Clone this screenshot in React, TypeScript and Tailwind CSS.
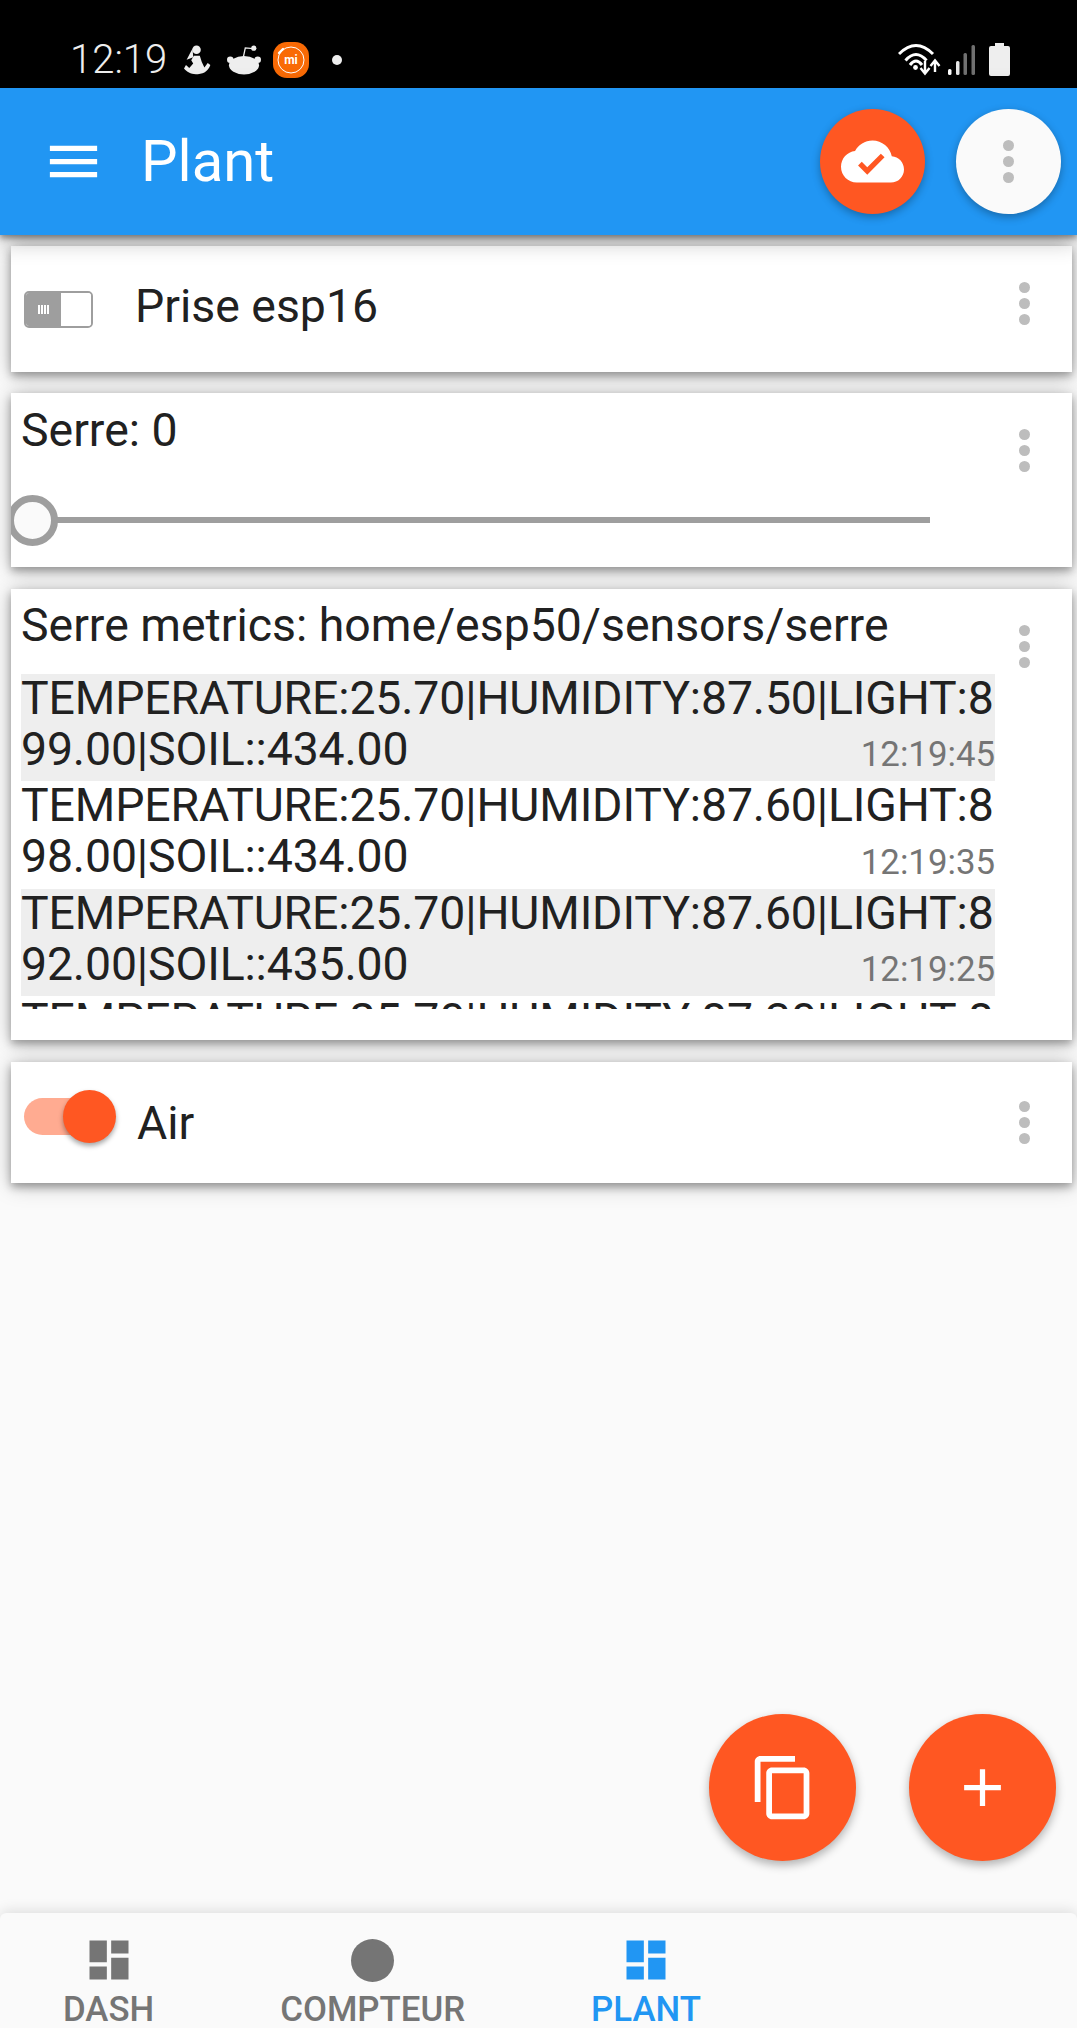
// App.tsx
const font = "font-['Roboto',sans-serif]";

const logs = [
  { text: "TEMPERATURE:25.70|HUMIDITY:87.50|LIGHT:899.00|SOIL::434.00", time: "12:19:45", shade: true },
  { text: "TEMPERATURE:25.70|HUMIDITY:87.60|LIGHT:898.00|SOIL::434.00", time: "12:19:35", shade: false },
  { text: "TEMPERATURE:25.70|HUMIDITY:87.60|LIGHT:892.00|SOIL::435.00", time: "12:19:25", shade: true },
  { text: "TEMPERATURE:25.70|HUMIDITY:87.30|LIGHT:890.00|SOIL::435.00", time: "12:19:15", shade: false },
];

const DASHBOARD = "M3 13h8V3H3v10zm0 8h8v-6H3v6zm10 0h8V11h-8v10zm0-18v6h8V3h-8z";

const Dots = () => (
  <div className="flex w-[11px] flex-col gap-[5px]">
    <span className="h-[11px] w-[11px] rounded-full bg-[#bdbdbd]" />
    <span className="h-[11px] w-[11px] rounded-full bg-[#bdbdbd]" />
    <span className="h-[11px] w-[11px] rounded-full bg-[#bdbdbd]" />
  </div>
);

const cardClass =
  "relative ml-[11px] mr-[5px] bg-white shadow-[0_4px_8px_rgba(0,0,0,0.3),0_2px_20px_rgba(0,0,0,0.25)]";

const StatusBar = () => (
  <div className="flex h-[88px] shrink-0 items-start justify-between bg-black">
    <div className="flex items-center pl-[70px] pt-[38px]">
      <span className="text-[40px] font-light leading-[44px] text-[#eeeeee]">12:19</span>
      {/* health app */}
      <svg width="27" height="30" viewBox="28 24 82 90" className="ml-[17px]" fill="#eeeeee">
        <circle cx="66" cy="38" r="13" />
        <path d="M54 34 36 68l20-7z" />
        <path d="M58 56h18l6 19 8 17 10-14 8 6c-6 16-16 26-38 28-20 2-32-6-42-17l6-11 10 9 12-13-6-10z" />
      </svg>
      {/* reddit */}
      <svg width="34" height="30" viewBox="158 24 104 90" className="ml-[16px]" fill="#eeeeee">
        <ellipse cx="210" cy="85" rx="46" ry="28" />
        <circle cx="168" cy="68" r="10" />
        <circle cx="252" cy="68" r="10" />
        <circle cx="240" cy="33" r="8" />
        <path d="M208 60l6-28 24 2" fill="none" stroke="#eeeeee" strokeWidth="4" />
      </svg>
      {/* mi */}
      <svg width="36" height="36" viewBox="0 0 36 36" className="ml-[12px]">
        <rect width="36" height="36" rx="14" fill="#f96a05" />
        <circle cx="18" cy="18" r="13" fill="none" stroke="#fff" strokeWidth="1" />
        <path d="M6 11l4-4" stroke="#fff" strokeWidth="2.4" strokeLinecap="round" />
        <text x="18" y="22" textAnchor="middle" fontSize="12" fontWeight="700" fill="#fff">
          mi
        </text>
      </svg>
      <span className="ml-[23px] h-[10px] w-[10px] rounded-full bg-[#eeeeee]" />
    </div>
    <div className="mr-[67px] mt-[43px] flex items-start">
      <svg width="78" height="33" viewBox="0 0 78 33" fill="none">
        <path d="M1 11Q18 -6 35 11" stroke="#fff" strokeWidth="3" />
        <path d="M7.5 17.5Q18 5.5 28.5 17.5" stroke="#fff" strokeWidth="3" />
        <path d="M12 22Q18 14 24 22" stroke="#fff" strokeWidth="3" />
        <circle cx="17.5" cy="24.5" r="2.4" fill="#fff" />
        <path d="M27 18v11M22.5 25l4.5 5.5 4.5-5.5" stroke="#fff" strokeWidth="2.4" />
        <path d="M37 29V19M32.5 23l4.5-5.5 4.5 5.5" stroke="#fff" strokeWidth="2.4" />
        <rect x="50" y="26" width="3.5" height="6" rx="1.5" fill="#fff" />
        <rect x="58" y="18" width="3.5" height="14" rx="1.5" fill="#e8e8e8" />
        <rect x="65.5" y="10" width="3.5" height="22" rx="1.5" fill="#707070" />
        <rect x="73.5" y="2" width="3.5" height="30" rx="1.5" fill="#707070" />
      </svg>
      <svg width="21" height="33" viewBox="0 0 21 33" className="ml-[13px]" fill="#eeeeee">
        <path d="M6 0h9v3h4a2 2 0 0 1 2 2v26a2 2 0 0 1-2 2H2a2 2 0 0 1-2-2V5a2 2 0 0 1 2-2h4z" />
      </svg>
    </div>
  </div>
);

const Header = () => (
  <div className="relative z-10 flex h-[147px] shrink-0 items-center bg-[#2196f3] pl-[42px] pr-[16px] shadow-[0_3px_6px_rgba(0,0,0,0.4),0_5px_22px_rgba(0,0,0,0.3)]">
    <svg width="63" height="63" viewBox="0 0 24 24" fill="#fff">
      <path d="M3 18h18v-2H3v2zm0-5h18v-2H3v2zm0-7v2h18V6H3z" />
    </svg>
    <h1 className="-mt-[2px] ml-[36px] flex-1 text-[58px] font-normal leading-none text-white">Plant</h1>
    <div className="flex h-[105px] w-[105px] items-center justify-center rounded-full bg-[#ff5722] shadow-[0_3px_8px_rgba(0,0,0,0.3)]">
      <svg width="63" height="63" viewBox="0 0 24 24" fill="#fff">
        <path
          fillRule="evenodd"
          d="M19.35 10.04C18.67 6.59 15.64 4 12 4 9.11 4 6.6 5.64 5.35 8.04 2.34 8.36 0 10.91 0 14c0 3.31 2.69 6 6 6h13c2.76 0 5-2.24 5-5 0-2.64-2.05-4.78-4.65-4.96zM10 17l-3.5-3.5 1.41-1.41L10 14.17 15.18 9l1.41 1.41L10 17z"
        />
      </svg>
    </div>
    <div className="ml-[31px] flex h-[105px] w-[105px] items-center justify-center rounded-full bg-[#fafafa] shadow-[0_3px_8px_rgba(0,0,0,0.3)]">
      <Dots />
    </div>
  </div>
);

const SwitchCard = () => (
  <div className={`${cardClass} mt-[11px] flex h-[126px] items-center pl-[13px] pr-[42px]`}>
    <div className="flex h-[37px] w-[69px] overflow-hidden rounded-[5px] border-2 border-[#9e9e9e]">
      <div className="flex w-[35px] items-center justify-center gap-[1.5px] bg-[#9e9e9e]">
        <span className="h-[9px] w-[1.5px] bg-white" />
        <span className="h-[9px] w-[1.5px] bg-white" />
        <span className="h-[9px] w-[1.5px] bg-white" />
        <span className="h-[9px] w-[1.5px] bg-white" />
      </div>
      <div className="flex-1 bg-white" />
    </div>
    <span className="-mt-[6px] ml-[42px] flex-1 text-[46.4px] leading-[50px] text-[#212121]">Prise esp16</span>
    <div className="-mt-[12px]">
      <Dots />
    </div>
  </div>
);

const SliderCard = () => (
  <div className={`${cardClass} mt-[21px] h-[174px] overflow-hidden`}>
    <div className="flex items-start justify-between pl-[10px] pr-[42px]">
      <span className="pt-[12px] text-[46.4px] leading-[50px] text-[#212121]">Serre: 0</span>
      <div className="pt-[36px]">
        <Dots />
      </div>
    </div>
    <div className="relative ml-[20px] mr-[142px] mt-[45px] h-[6px] bg-[#9e9e9e]">
      <span className="absolute left-[-24px] top-[-22px] h-[51px] w-[51px] rounded-full border-[7px] border-[#9e9e9e] bg-[#fafafa]" />
    </div>
  </div>
);

const MetricsCard = () => (
  <div className={`${cardClass} mt-[22px] h-[451px] pl-[10px] pr-[42px] pt-[11px]`}>
    <div className="flex items-start justify-between">
      <span className="text-[46.4px] leading-[50px] text-[#212121]">Serre metrics: home/esp50/sensors/serre</span>
      <div className="pt-[25px]">
        <Dots />
      </div>
    </div>
    <div className="mt-[6px] h-[335px] w-[974px] overflow-hidden">
      {logs.map((row) => (
        <div key={row.time} className={`relative h-[107.3px] ${row.shade ? "bg-[#eeeeee]" : "bg-white"}`}>
          <div className="-translate-y-[1px] break-all text-[46.4px] leading-[51px] tracking-[-0.14px] text-[#212121]">
            {row.text}
          </div>
          <span className="absolute bottom-[9px] right-0 text-[34.8px] leading-[36px] text-[#757575]">{row.time}</span>
        </div>
      ))}
    </div>
  </div>
);

const ToggleCard = () => (
  <div className={`${cardClass} mt-[22px] flex h-[121px] items-center pl-[13px] pr-[42px]`}>
    <div className="relative -mt-[12px] h-[37px] w-[80px] rounded-full bg-[#ffab91]">
      <span className="absolute left-[39px] top-[-8px] h-[53px] w-[53px] rounded-full bg-[#ff5722] shadow-[0_3px_5px_rgba(0,0,0,0.35)]" />
    </div>
    <span className="ml-[33px] flex-1 text-[46.4px] leading-[50px] text-[#212121]">Air</span>
    <Dots />
  </div>
);

const NavItem = ({ label, color, children }: { label: string; color: string; children: React.ReactNode }) => (
  <div className={`flex flex-col items-center px-[63px] pt-[21px] ${color}`}>
    <div className="flex h-[52px] shrink-0 items-center justify-center">{children}</div>
    <span className="mt-[4px] shrink-0 text-[34.8px] font-medium leading-[38px]">{label}</span>
  </div>
);

export default function App() {
  return (
    <div className={`relative flex h-[2028px] w-[1077px] flex-col overflow-hidden bg-[#fafafa] ${font}`}>
      <StatusBar />
      <Header />
      <div className="flex-1">
        <SwitchCard />
        <SliderCard />
        <MetricsCard />
        <ToggleCard />
      </div>

      {/* floating buttons */}
      <div className="absolute bottom-[167px] right-[21px] z-10 flex gap-[53px]">
        <div className="flex h-[147px] w-[147px] items-center justify-center rounded-full bg-[#ff5722] shadow-[0_4px_10px_rgba(0,0,0,0.3)]">
          <svg width="69" height="69" viewBox="0 0 24 24" fill="#fff" className="ml-[2px]">
            <path d="M16 1H4c-1.1 0-2 .9-2 2v14h2V3h12V1zm3 4H8c-1.1 0-2 .9-2 2v14c0 1.1.9 2 2 2h11c1.1 0 2-.9 2-2V7c0-1.1-.9-2-2-2zm0 16H8V7h11v14z" />
          </svg>
        </div>
        <div className="flex h-[147px] w-[147px] items-center justify-center rounded-full bg-[#ff5722] shadow-[0_4px_10px_rgba(0,0,0,0.3)]">
          <svg width="63" height="63" viewBox="0 0 24 24" fill="#fff">
            <path d="M19 13h-6v6h-2v-6H5v-2h6V5h2v6h6v2z" />
          </svg>
        </div>
      </div>

      {/* bottom tabs */}
      <div className="flex h-[115px] shrink-0 rounded-t-[6px] bg-[#fafafa] shadow-[0_-2px_14px_rgba(0,0,0,0.12)]">
        <NavItem label="DASH" color="text-[#757575]">
          <svg width="52" height="52" viewBox="0 0 24 24" fill="currentColor">
            <path d={DASHBOARD} />
          </svg>
        </NavItem>
        <NavItem label="COMPTEUR" color="text-[#757575]">
          <span className="h-[43px] w-[43px] rounded-full bg-[#757575]" />
        </NavItem>
        <NavItem label="PLANT" color="text-[#2196f3]">
          <svg width="52" height="52" viewBox="0 0 24 24" fill="currentColor">
            <path d={DASHBOARD} />
          </svg>
        </NavItem>
      </div>
    </div>
  );
}
